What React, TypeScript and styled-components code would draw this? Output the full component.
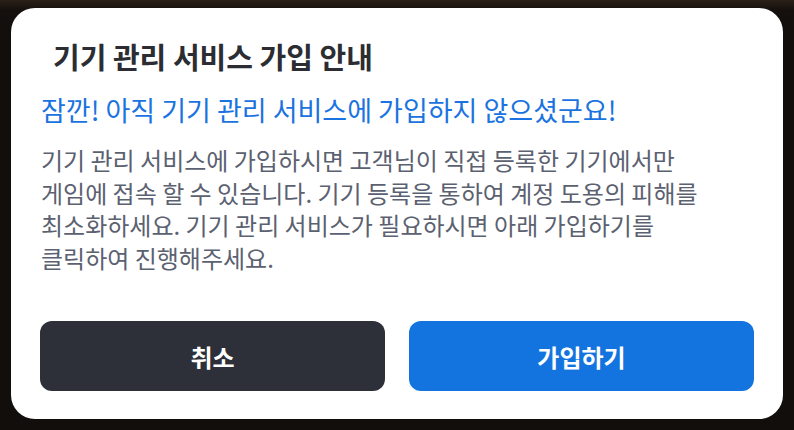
import styled, { createGlobalStyle } from 'styled-components'

const GlobalStyle = createGlobalStyle`
  html, body {
    margin: 0;
    padding: 0;
    background: #110e0c;
  }
  body {
    font-family: 'Noto Sans CJK KR', 'Noto Sans', sans-serif;
  }
`

const Backdrop = styled.div`
  width: 794px;
  height: 430px;
  box-sizing: border-box;
  padding: 8px 11px 11px 11px;
  background: linear-gradient(180deg, #2a2118 0px, #15100d 10px, #110e0c 40px);
`

const Dialog = styled.div`
  box-sizing: border-box;
  height: 411px;
  background: #ffffff;
  border-radius: 24px;
  padding: 30px 29px 28px 29px;
  display: flex;
  flex-direction: column;
`

const Title = styled.h2`
  margin: 0;
  padding-left: 13px;
  font-size: 29px;
  line-height: 36px;
  font-weight: 700;
  color: #2b2d33;
`

const Notice = styled.p`
  margin: 19px 0 0 1px;
  font-size: 27px;
  line-height: 34px;
  font-weight: 400;
  color: #1a73e0;
`

const Body = styled.p`
  margin: 17px 0 0 1px;
  font-size: 24px;
  line-height: 32.5px;
  font-weight: 400;
  color: #5b6170;
`

const Actions = styled.div`
  margin-top: auto;
  display: grid;
  grid-template-columns: 1fr 1fr;
  gap: 24px;
`

const Button = styled.button<{ $primary?: boolean }>`
  height: 70px;
  border: none;
  border-radius: 12px;
  background: ${({ $primary }) => ($primary ? '#1474df' : '#2d3038')};
  color: #ffffff;
  font-family: inherit;
  font-size: 24px;
  font-weight: 700;
  cursor: pointer;
`

export default function App() {
  return (
    <>
      <GlobalStyle />
      <Backdrop>
        <Dialog>
          <Title>기기 관리 서비스 가입 안내</Title>
          <Notice>잠깐! 아직 기기 관리 서비스에 가입하지 않으셨군요!</Notice>
          <Body>
            기기 관리 서비스에 가입하시면 고객님이 직접 등록한 기기에서만
            <br />
            게임에 접속 할 수 있습니다. 기기 등록을 통하여 계정 도용의 피해를
            <br />
            최소화하세요. 기기 관리 서비스가 필요하시면 아래 가입하기를
            <br />
            클릭하여 진행해주세요.
          </Body>
          <Actions>
            <Button>취소</Button>
            <Button $primary>가입하기</Button>
          </Actions>
        </Dialog>
      </Backdrop>
    </>
  )
}
